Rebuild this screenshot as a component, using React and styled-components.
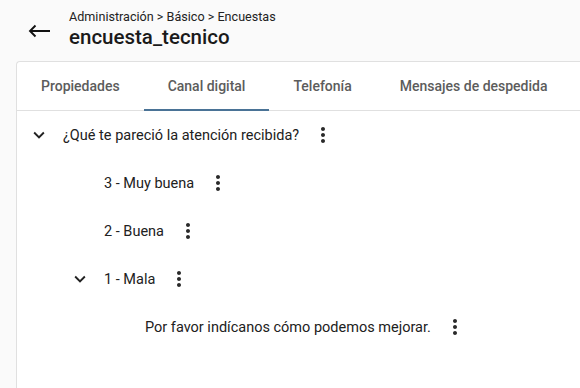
import React from 'react';
import styled, { createGlobalStyle } from 'styled-components';

const GlobalStyle = createGlobalStyle`
  html, body {
    margin: 0;
    padding: 0;
    background: #fafafa;
    font-family: Roboto, "Liberation Sans", sans-serif;
    overflow: hidden;
  }
`;

const Page = styled.div`
  width: 580px;
  height: 388px;
  display: flex;
  flex-direction: column;
`;

const Header = styled.div`
  display: flex;
  align-items: center;
  height: 61px;
  padding-left: 28px;
  box-sizing: border-box;
`;

const BackButton = styled.button`
  border: none;
  background: none;
  padding: 0;
  margin: 0 18px 0 0;
  width: 23px;
  height: 22px;
  display: flex;
  align-items: center;
  justify-content: center;
  color: #111;
  cursor: pointer;
`;

const Titles = styled.div`
  display: flex;
  flex-direction: column;
  margin-top: -4px;
`;

const Crumbs = styled.div`
  font-size: 12.6px;
  color: #222;
  line-height: 16px;
`;

const Title = styled.h1`
  margin: 0;
  font-size: 20.5px;
  font-weight: 500;
  color: #1a1a1a;
  line-height: 24px;
`;

const Card = styled.div`
  flex: 1;
  margin-left: 16px;
  margin-right: -20px;
  background: #fff;
  border: 1px solid #e0e0e0;
  border-right: none;
  border-bottom: none;
  border-top-left-radius: 4px;
  display: flex;
  flex-direction: column;
`;

const TabBar = styled.div`
  display: flex;
  height: 48px;
  border-bottom: 1px solid #e0e0e0;
`;

const Tab = styled.div`
  position: relative;
  padding: 0 24px;
  display: flex;
  align-items: center;
  font-size: 14px;
  font-weight: 500;
  color: #5c5c5c;
  white-space: nowrap;
  cursor: pointer;

  &::after {
    content: '';
    position: absolute;
    left: 0;
    right: 0;
    bottom: -1px;
    height: 2px;
    background: ${(p) => (p.$active ? '#4a7396' : 'transparent')};
  }
`;

const Tree = styled.div`
  display: flex;
  flex-direction: column;
`;

const Row = styled.div`
  display: flex;
  align-items: center;
  height: 48px;
  padding-left: ${(p) => 46 + p.$level * 41}px;
  font-size: 14.5px;
  color: #212121;
`;

const Toggle = styled.span`
  width: 35px;
  margin-left: -35px;
  display: flex;
  align-items: center;
  color: #222;
`;

const Kebab = styled.button`
  border: none;
  background: none;
  padding: 0;
  margin-left: 12px;
  width: 24px;
  height: 24px;
  display: flex;
  align-items: center;
  justify-content: center;
  color: #2a2a2a;
  cursor: pointer;
`;

const Arrow = () => (
  <svg width="23" height="22" viewBox="0 0 23 22" fill="none" stroke="currentColor" strokeWidth="1.9">
    <path d="M2 11h20M7.5 5.5L2 11l5.5 5.5" />
  </svg>
);

const Chevron = () => (
  <svg width="22" height="22" viewBox="0 0 24 24" fill="currentColor">
    <path d="M16.59 8.59L12 13.17 7.41 8.59 6 10l6 6 6-6z" />
  </svg>
);

const Dots = () => (
  <svg width="24" height="24" viewBox="0 0 24 24" fill="currentColor">
    <path d="M12 8c1.1 0 2-.9 2-2s-.9-2-2-2-2 .9-2 2 .9 2 2 2zm0 2c-1.1 0-2 .9-2 2s.9 2 2 2 2-.9 2-2-.9-2-2-2zm0 6c-1.1 0-2 .9-2 2s.9 2 2 2 2-.9 2-2-.9-2-2-2z" />
  </svg>
);

const tabs = ['Propiedades', 'Canal digital', 'Telefonía', 'Mensajes de despedida'];

const nodes = [
  { level: 0, text: '¿Qué te pareció la atención recibida?', open: true },
  { level: 1, text: '3 - Muy buena' },
  { level: 1, text: '2 - Buena' },
  { level: 1, text: '1 - Mala', open: true },
  { level: 2, text: 'Por favor indícanos cómo podemos mejorar.' },
];

const App = () => {
  return (
    <Page>
      <GlobalStyle />
      <Header>
        <BackButton aria-label="Volver">
          <Arrow />
        </BackButton>
        <Titles>
          <Crumbs>Administración &gt; Básico &gt; Encuestas</Crumbs>
          <Title>encuesta_tecnico</Title>
        </Titles>
      </Header>
      <Card>
        <TabBar>
          {tabs.map((t) => (
            <Tab key={t} $active={t === 'Canal digital'}>
              {t}
            </Tab>
          ))}
        </TabBar>
        <Tree>
          {nodes.map((n) => (
            <Row key={n.text} $level={n.level}>
              {n.open && (
                <Toggle>
                  <Chevron />
                </Toggle>
              )}
              <span>{n.text}</span>
              <Kebab aria-label="Opciones">
                <Dots />
              </Kebab>
            </Row>
          ))}
        </Tree>
      </Card>
    </Page>
  );
};

export default App;
